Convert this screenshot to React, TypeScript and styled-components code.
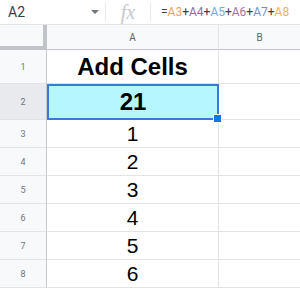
import React from 'react'
import styled, { createGlobalStyle } from 'styled-components'

const GlobalStyle = createGlobalStyle`
  html, body {
    margin: 0;
    padding: 0;
    background: #ffffff;
  }
  body {
    font-family: Roboto, 'Liberation Sans', Arial, sans-serif;
  }
`

const refColors = ['#eaa46a', '#8f6aa6', '#74a9dc', '#a7709f', '#6e91d6', '#efb54c']

const App: React.FC = () => {
  const refs = ['A3', 'A4', 'A5', 'A6', 'A7', 'A8']
  const values = [1, 2, 3, 4, 5, 6]

  return (
    <Page>
      <GlobalStyle />
      <FormulaBar>
        <NameBox>
          <span>A2</span>
          <Caret />
        </NameBox>
        <Divider />
        <FxLabel>fx</FxLabel>
        <Divider />
        <Formula>
          =
          {refs.map((r, i) => (
            <React.Fragment key={r}>
              {i > 0 && '+'}
              <Ref $color={refColors[i]}>{r}</Ref>
            </React.Fragment>
          ))}
        </Formula>
      </FormulaBar>
      <Grid>
        <Corner />
        <ColHeader>A</ColHeader>
        <ColHeader $last>B</ColHeader>

        <RowHeader $height={34}>1</RowHeader>
        <Cell $bold>Add Cells</Cell>
        <Cell $last />

        <RowHeader $height={36} $active>2</RowHeader>
        <SelectedCell $bold>
          21
          <Handle />
        </SelectedCell>
        <Cell $last />

        {values.map((v, i) => (
          <React.Fragment key={v}>
            <RowHeader $height={28}>{i + 3}</RowHeader>
            <Cell>{v}</Cell>
            <Cell $last />
          </React.Fragment>
        ))}
      </Grid>
    </Page>
  )
}

const Page = styled.div`
  width: 300px;
  height: 289px;
  overflow: hidden;
  background: #fff;
`

const FormulaBar = styled.div`
  display: flex;
  align-items: center;
  height: 24px;
  border-bottom: 1px solid #e1e3e6;
  color: #202124;
  font-size: 13px;
`

const NameBox = styled.div`
  display: flex;
  align-items: center;
  justify-content: space-between;
  width: 105px;
  padding-left: 8px;
  padding-right: 6px;
  box-sizing: border-box;
  font-size: 14px;
  color: #3c4043;
`

const Caret = styled.span`
  width: 0;
  height: 0;
  border-left: 4px solid transparent;
  border-right: 4px solid transparent;
  border-top: 4px solid #70757a;
`

const Divider = styled.div`
  width: 1px;
  height: 20px;
  background: #e8eaed;
`

const FxLabel = styled.div`
  width: 44px;
  text-align: center;
  font-family: 'Liberation Serif', 'DejaVu Serif', serif;
  font-style: italic;
  font-size: 20px;
  color: #c6c8cb;
`

const Formula = styled.div`
  padding-left: 10px;
  font-size: 12px;
  color: #3c4043;
  white-space: nowrap;
`

const Ref = styled.span<{ $color: string }>`
  color: ${({ $color }) => $color};
`

const Grid = styled.div`
  display: grid;
  grid-template-columns: 47px 172px 1fr;
  grid-template-rows: 25px;
`

const Corner = styled.div`
  height: 25px;
  box-sizing: border-box;
  background: #f8f9fa;
  border-right: 4px solid #c0c3c7;
  border-bottom: 4px solid #c0c3c7;
`

const ColHeader = styled.div<{ $last?: boolean }>`
  height: 25px;
  box-sizing: border-box;
  display: flex;
  align-items: center;
  justify-content: center;
  background: #f8f9fa;
  border-right: ${({ $last }) => ($last ? 'none' : '1px solid #e2e3e5')};
  border-bottom: 1px solid #c0c3c7;
  font-size: 10px;
  color: #5f6368;
`

const RowHeader = styled.div<{ $height: number; $active?: boolean }>`
  height: ${({ $height }) => $height}px;
  box-sizing: border-box;
  display: flex;
  align-items: center;
  justify-content: center;
  background: ${({ $active }) => ($active ? '#e8eaed' : '#f8f9fa')};
  border-right: 1px solid #c7c9cc;
  border-bottom: 1px solid #e2e3e5;
  font-size: 9px;
  color: #70757a;
`

const Cell = styled.div<{ $bold?: boolean; $last?: boolean }>`
  box-sizing: border-box;
  display: flex;
  align-items: center;
  justify-content: center;
  background: #fff;
  border-right: ${({ $last }) => ($last ? 'none' : '1px solid #e2e3e5')};
  border-bottom: 1px solid #e2e3e5;
  font-family: Arial, 'Liberation Sans', sans-serif;
  font-size: ${({ $bold }) => ($bold ? '24px' : '21px')};
  font-weight: ${({ $bold }) => ($bold ? 700 : 400)};
  color: #000;
`

const SelectedCell = styled(Cell)`
  position: relative;
  background: #b5f6ff;
  border: 2px solid #3b78d8;
`

const Handle = styled.div`
  position: absolute;
  right: -5px;
  bottom: -5px;
  width: 7px;
  height: 7px;
  background: #1a73e8;
  border: 1px solid #fff;
`

export default App
